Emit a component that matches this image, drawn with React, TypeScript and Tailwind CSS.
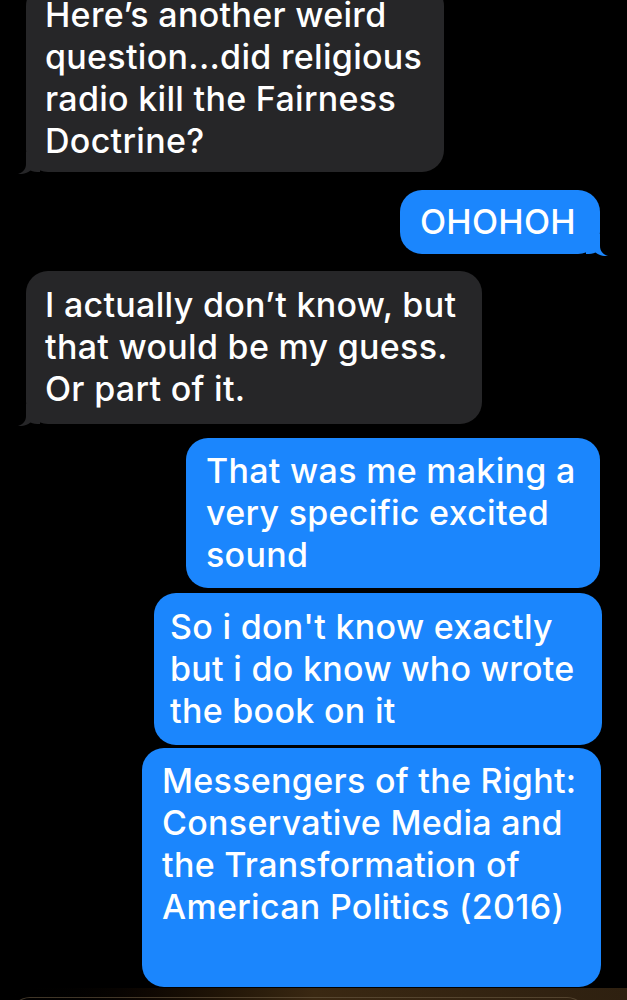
import React from 'react'

type Side = 'in' | 'out'

interface BubbleProps {
  side: Side
  lines: string[]
  tail?: boolean
  className?: string
}

function Tail({ side }: { side: Side }) {
  return (
    <svg
      width="22"
      height="22"
      viewBox="0 0 22 22"
      className={`absolute bottom-[-2px] ${side === 'in' ? '-left-[8px]' : '-right-[8px] -scale-x-100'}`}
    >
      <path
        d="M8 0 V12 C8 17 5 20.5 0 22 C5 22.5 9.5 21 12.5 18.5 C15 20 18 20 22 20 V0 Z"
        fill={side === 'in' ? '#262628' : '#1b86fd'}
      />
    </svg>
  )
}

function Bubble({ side, lines, tail, className = '' }: BubbleProps) {
  return (
    <div
      className={`relative rounded-[22px] text-white text-[34px] font-medium leading-[42px] tracking-[0.3px] ${
        side === 'in' ? 'bg-[#262628] self-start' : 'bg-[#1b86fd] self-end'
      } ${className}`}
    >
      {lines.map((l, i) => (
        <div key={i} className="whitespace-nowrap">
          {l === '' ? '\u00a0' : l}
        </div>
      ))}
      {tail && <Tail side={side} />}
    </div>
  )
}

export default function App() {
  return (
    <div
      className="relative h-[1000px] w-[627px] overflow-hidden bg-black"
      style={{ fontFamily: 'Inter, "Noto Sans", sans-serif' }}
    >
      <div className="flex flex-col">
        <Bubble
          side="in"
          tail
          className="ml-[26px] mt-[-16px] w-[418px] pl-[19px] pt-[10px] pb-[10px]"
          lines={['Here’s another weird', 'question...did religious', 'radio kill the Fairness', 'Doctrine?']}
        />
        <Bubble
          side="out"
          tail
          className="mr-[27px] mt-[18px] w-[200px] pl-[20px] py-[11px]"
          lines={['OHOHOH']}
        />
        <Bubble
          side="in"
          tail
          className="ml-[26px] mt-[17px] w-[456px] pl-[19px] pt-[13px] pb-[14px]"
          lines={['I actually don’t know, but', 'that would be my guess.', 'Or part of it.']}
        />
        <Bubble
          side="out"
          className="mr-[27px] mt-[14px] w-[414px] pl-[20px] py-[12px]"
          lines={['That was me making a', 'very specific excited', 'sound']}
        />
        <Bubble
          side="out"
          className="mr-[25px] mt-[5px] w-[448px] pl-[16px] py-[13px]"
          lines={['So i don\'t know exactly', 'but i do know who wrote', 'the book on it']}
        />
        <Bubble
          side="out"
          className="mr-[26px] mt-[3px] h-[239px] w-[459px] pl-[20px] py-[12px]"
          lines={['Messengers of the Right:', 'Conservative Media and', 'the Transformation of', 'American Politics (2016)']}
        />
      </div>

      {/* blurred input bar peeking at the bottom */}
      <div className="absolute bottom-0 left-0 right-0 h-[12px] bg-gradient-to-r from-black via-[#3a2812] to-[#2e2010]">
        <div className="ml-[10px] mr-[40px] mt-[9px] h-[20px] rounded-t-[20px] border border-[#6b5a44]/60" />
      </div>
    </div>
  )
}
